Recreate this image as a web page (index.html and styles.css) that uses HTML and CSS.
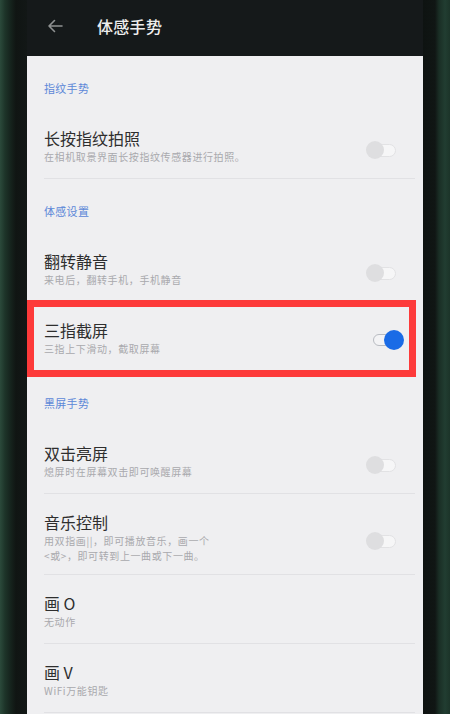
FILE: index.html
```html
<!DOCTYPE html>
<html lang="zh-CN">
<head>
<meta charset="utf-8">
<title>体感手势</title>
<link rel="stylesheet" href="styles.css">
</head>
<body>
<div class="device">
  <div class="bezel bezel-left"></div>
  <main class="screen">
    <header class="appbar">
      <svg class="back" width="16" height="14" viewBox="0 0 16 14" aria-hidden="true">
        <path d="M15 7H2M7.5 1.5 2 7l5.5 5.5" fill="none" stroke="currentColor" stroke-width="1.6" stroke-linecap="round" stroke-linejoin="round"/>
      </svg>
      <h1 class="appbar-title">体感手势</h1>
    </header>

    <section class="list">
      <div class="group-label">指纹手势</div>
      <div class="item divided">
        <div class="item-text">
          <div class="item-title">长按指纹拍照</div>
          <div class="item-sub">在相机取景界面长按指纹传感器进行拍照。</div>
        </div>
        <span class="switch"><span class="track"></span><span class="knob"></span></span>
      </div>

      <div class="group-label">体感设置</div>
      <div class="item">
        <div class="item-text">
          <div class="item-title">翻转静音</div>
          <div class="item-sub">来电后，翻转手机，手机静音</div>
        </div>
        <span class="switch"><span class="track"></span><span class="knob"></span></span>
      </div>
      <div class="item marked">
        <div class="item-text">
          <div class="item-title">三指截屏</div>
          <div class="item-sub">三指上下滑动，截取屏幕</div>
        </div>
        <span class="switch on"><span class="track"></span><span class="knob"></span></span>
        <span class="mark"></span>
      </div>

      <div class="group-label">黑屏手势</div>
      <div class="item divided">
        <div class="item-text">
          <div class="item-title">双击亮屏</div>
          <div class="item-sub">熄屏时在屏幕双击即可唤醒屏幕</div>
        </div>
        <span class="switch"><span class="track"></span><span class="knob"></span></span>
      </div>
      <div class="item divided tall">
        <div class="item-text">
          <div class="item-title">音乐控制</div>
          <div class="item-sub two-line">用双指画||，即可播放音乐，画一个<br>&lt;或&gt;，即可转到上一曲或下一曲。</div>
        </div>
        <span class="switch"><span class="track"></span><span class="knob"></span></span>
      </div>
      <div class="item divided">
        <div class="item-text">
          <div class="item-title">画 O</div>
          <div class="item-sub">无动作</div>
        </div>
      </div>
      <div class="item divided">
        <div class="item-text">
          <div class="item-title">画 V</div>
          <div class="item-sub">WiFi万能钥匙</div>
        </div>
      </div>
    </section>
  </main>
  <div class="bezel bezel-right"></div>
</div>
</body>
</html>
```

FILE: styles.css
```css
* {
  box-sizing: border-box;
}

html,
body {
  margin: 0;
  height: 100%;
  overflow: hidden;
  background: #101513;
}

body {
  font-family: "Noto Sans CJK SC", "Noto Sans", sans-serif;
}

.device {
  display: flex;
  height: 714px;
}

.bezel {
  flex: 0 0 27px;
}

.bezel-left {
  background: linear-gradient(to right, #2b4a3b 0, #1d3429 5px, #15221c 11px, #101513 16px, #121716 27px);
}

.bezel-right {
  background: linear-gradient(to right, #0e1311 0, #101614 12px, #1a2e25 16px, #213d31 22px, #1c3429 27px);
}

.screen {
  flex: 0 0 396px;
  display: flex;
  flex-direction: column;
  background: #efeff1;
  overflow: hidden;
}

/* dark title bar */
.appbar {
  flex: 0 0 56px;
  display: flex;
  align-items: center;
  gap: 34px;
  padding: 0 0 4px 20px;
  background: #15191a;
}

.back {
  color: #8e9191;
  flex: none;
}

.appbar-title {
  margin: 0;
  font-size: 16px;
  font-weight: 500;
  color: #eeeeee;
  letter-spacing: 0.3px;
}

/* settings list */
.list {
  display: flex;
  flex-direction: column;
}

.group-label {
  padding: 25px 17px 15px;
  font-size: 11px;
  line-height: 14px;
  color: #5d88d8;
  letter-spacing: 0.3px;
}

.item {
  position: relative;
  display: flex;
  align-items: center;
  min-height: 69px;
  padding: 17px 27px 14px 17px;
}

.item.divided::after {
  content: "";
  position: absolute;
  left: 17px;
  right: 8px;
  bottom: 0;
  height: 1px;
  background: #e1e1e4;
}

.item-text {
  flex: 1;
  align-self: flex-start;
}

.item-title {
  font-size: 16px;
  line-height: 22px;
  color: #2e2e2e;
}

.item-sub {
  font-size: 10px;
  line-height: 16px;
  color: #a9a9ad;
  letter-spacing: 0.6px;
}

.item.tall {
  padding-bottom: 12px;
}

.item-sub.two-line {
  line-height: 15px;
}

/* toggle switch */
.switch {
  position: relative;
  flex: none;
  width: 30px;
  height: 18px;
  margin-top: 8px;
}

.switch .track {
  position: absolute;
  left: 4px;
  right: 0;
  top: 3px;
  height: 13px;
  border-radius: 7px;
  background: #f6f6f7;
  border: 1px solid #e2e2e4;
}

.switch .knob {
  position: absolute;
  left: 0;
  top: 0;
  width: 18px;
  height: 18px;
  border-radius: 50%;
  background: #dedee0;
}

.switch.on {
  width: 31px;
  height: 20px;
  margin-right: -8px;
  margin-top: 4px;
}

.switch.on .track {
  left: 0;
  right: 6px;
  top: 4px;
  height: 12px;
  background: #f3f3f5;
  border: 1.5px solid #b9bcc2;
}

.switch.on .knob {
  left: auto;
  right: 0;
  width: 20px;
  height: 20px;
  background: #1a6be6;
}

/* red highlight frame drawn over the 三指截屏 row */
.marked .mark {
  position: absolute;
  left: 0;
  top: -2px;
  width: 389px;
  height: 77px;
  border: 7px solid #fd3a3a;
  pointer-events: none;
}
```
